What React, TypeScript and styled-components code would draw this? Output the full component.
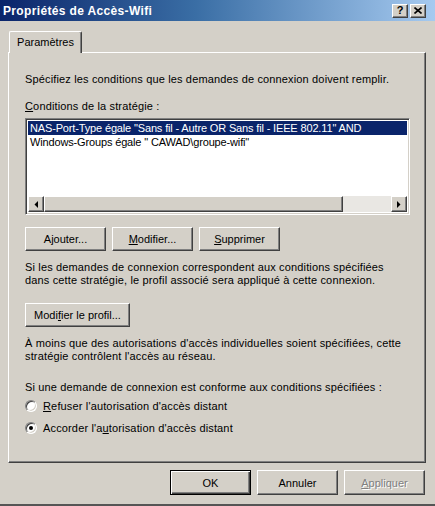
import React from "react";
import styled, { createGlobalStyle, css } from "styled-components";

const Global = createGlobalStyle`
  html, body { margin: 0; padding: 0; background: #d4d0c8; }
  body { font-family: "Liberation Sans", Arial, sans-serif; font-size: 11px; color: #000; }
  * { box-sizing: border-box; }
`;

const raised = css`
  border: 1px solid;
  border-color: #ffffff #404040 #404040 #ffffff;
  box-shadow: inset -1px -1px 0 #808080;
`;

const Window = styled.div`
  width: 435px;
  height: 506px;
  display: flex;
  flex-direction: column;
  background: #d4d0c8;
  border-bottom: 2px solid #555555;
`;

const TitleBar = styled.div`
  height: 21px;
  flex: none;
  display: flex;
  align-items: center;
  padding: 0 9px 0 3px;
  background: linear-gradient(to right, #0a246a 0%, #3a6ea5 45%, #a6caf0 100%);
`;

const Title = styled.div`
  color: #fff;
  font-weight: bold;
  font-size: 12px;
  letter-spacing: 0.35px;
`;

const CaptionButtons = styled.div`
  margin-left: auto;
  display: flex;
  gap: 2px;
`;

const CaptionButton = styled.div`
  ${raised};
  width: 16px;
  height: 14px;
  background: #d4d0c8;
  display: flex;
  align-items: center;
  justify-content: center;
  font-weight: bold;
  font-size: 11px;
  line-height: 1;
  color: #000;
`;

const Body = styled.div`
  flex: 1;
  display: flex;
  flex-direction: column;
  padding: 10px 0 0 8px;
`;

const TabStrip = styled.div`
  display: flex;
  padding-left: 1px;
  position: relative;
  z-index: 1;
  margin-bottom: -1px;
`;

const Tab = styled.div`
  width: 73px;
  height: 22px;
  background: #d4d0c8;
  border-left: 1px solid #fff;
  border-top: 1px solid #fff;
  border-right: 1px solid #404040;
  border-radius: 2px 2px 0 0;
  box-shadow: inset -1px 0 0 #808080;
  display: flex;
  align-items: center;
  justify-content: center;
  padding-bottom: 1px;
`;

const Panel = styled.div`
  width: 418px;
  height: 411px;
  border: 1px solid;
  border-color: #ffffff #404040 #404040 #ffffff;
  box-shadow: inset -1px -1px 0 #808080;
  padding: 20px 0 0 16px;
  display: flex;
  flex-direction: column;
`;

const Text = styled.div<{ $mt?: number }>`
  line-height: 13px;
  letter-spacing: 0.15px;
  margin-top: ${(p) => p.$mt ?? 0}px;
  white-space: nowrap;
`;

const ListBox = styled.div`
  margin-top: 5px;
  width: 385px;
  height: 97px;
  border: 1px solid;
  border-color: #808080 #ffffff #ffffff #808080;
  box-shadow: inset 1px 1px 0 #404040, inset -1px -1px 0 #d4d0c8;
  background: #fff;
  padding: 2px;
  display: flex;
  flex-direction: column;
`;

const Rows = styled.div`
  flex: 1;
  overflow: hidden;
`;

const ListRow = styled.div<{ $selected?: boolean }>`
  height: 14px;
  line-height: 14px;
  padding-left: 2px;
  white-space: nowrap;
  overflow: hidden;
  letter-spacing: -0.15px;
  background: ${(p) => (p.$selected ? "#0a246a" : "transparent")};
  color: ${(p) => (p.$selected ? "#fff" : "#000")};
`;

const HScroll = styled.div`
  height: 16px;
  display: flex;
  background: #e9e7e3;
`;

const ScrollArrow = styled.div`
  ${raised};
  width: 16px;
  height: 16px;
  background: #d4d0c8;
  display: flex;
  align-items: center;
  justify-content: center;
`;

const ScrollThumb = styled.div`
  ${raised};
  width: 299px;
  height: 16px;
  background: #d4d0c8;
`;

const ScrollTrack = styled.div`
  flex: 1;
`;

const ButtonRow = styled.div<{ $mt: number }>`
  display: flex;
  gap: 6px;
  margin-top: ${(p) => p.$mt}px;
`;

const Button = styled.div<{ $w?: number; $h?: number; $default?: boolean; $disabled?: boolean }>`
  width: ${(p) => p.$w ?? 81}px;
  height: ${(p) => p.$h ?? 24}px;
  background: #d4d0c8;
  display: flex;
  align-items: center;
  justify-content: center;
  ${(p) =>
    p.$default
      ? css`
          border: 1px solid #000;
          box-shadow: inset 1px 1px 0 #fff, inset -1px -1px 0 #404040, inset -2px -2px 0 #808080;
        `
      : raised}
  color: ${(p) => (p.$disabled ? "#808080" : "#000")};
  text-shadow: ${(p) => (p.$disabled ? "1px 1px 0 #fff" : "none")};
`;

const RadioRow = styled.div<{ $mt: number }>`
  display: flex;
  align-items: center;
  gap: 6px;
  height: 13px;
  letter-spacing: 0.15px;
  margin-top: ${(p) => p.$mt}px;
`;

const Radio = styled.div<{ $checked?: boolean }>`
  width: 12px;
  height: 12px;
  border-radius: 50%;
  border: 1px solid;
  border-color: #808080 #ffffff #ffffff #808080;
  box-shadow: inset 1px 1px 0 #404040, inset -1px -1px 0 #d4d0c8;
  background: #fff;
  display: flex;
  align-items: center;
  justify-content: center;
  &::after {
    content: "";
    width: 4px;
    height: 4px;
    border-radius: 50%;
    background: ${(p) => (p.$checked ? "#000" : "transparent")};
  }
`;

const Footer = styled.div`
  display: flex;
  justify-content: flex-end;
  gap: 6px;
  padding: 7px 10px 0 0;
`;

const Arrow = ({ dir }: { dir: "left" | "right" }) => (
  <svg width="4" height="7" viewBox="0 0 4 7">
    {dir === "left" ? <polygon points="4,0 4,7 0.5,3.5" fill="#000" /> : <polygon points="0,0 0,7 3.5,3.5" fill="#000" />}
  </svg>
);

export default function App() {
  return (
    <>
      <Global />
      <Window>
        <TitleBar>
          <Title>Propriétés de Accès-Wifi</Title>
          <CaptionButtons>
            <CaptionButton>?</CaptionButton>
            <CaptionButton>
              <svg width="8" height="7" viewBox="0 0 8 7">
                <path d="M0.5 0.5 L7.5 6.5 M7.5 0.5 L0.5 6.5" stroke="#000" strokeWidth="1.6" />
              </svg>
            </CaptionButton>
          </CaptionButtons>
        </TitleBar>
        <Body>
          <TabStrip>
            <Tab>Paramètres</Tab>
          </TabStrip>
          <Panel>
            <Text>Spécifiez les conditions que les demandes de connexion doivent remplir.</Text>
            <Text $mt={14}>
              <u>C</u>onditions de la stratégie :
            </Text>
            <ListBox>
              <Rows>
                <ListRow $selected>NAS-Port-Type égale "Sans fil - Autre OR Sans fil - IEEE 802.11" AND</ListRow>
                <ListRow>Windows-Groups égale " CAWAD\groupe-wifi"</ListRow>
              </Rows>
              <HScroll>
                <ScrollArrow>
                  <Arrow dir="left" />
                </ScrollArrow>
                <ScrollThumb />
                <ScrollTrack />
                <ScrollArrow>
                  <Arrow dir="right" />
                </ScrollArrow>
              </HScroll>
            </ListBox>
            <ButtonRow $mt={12}>
              <Button>
                A<u>j</u>outer...
              </Button>
              <Button>
                <u>M</u>odifier...
              </Button>
              <Button>
                <u>S</u>upprimer
              </Button>
            </ButtonRow>
            <Text $mt={10}>
              Si les demandes de connexion correspondent aux conditions spécifiées
              <br />
              dans cette stratégie, le profil associé sera appliqué à cette connexion.
            </Text>
            <ButtonRow $mt={16}>
              <Button $w={105}>
                Modi<u>f</u>ier le profil...
              </Button>
            </ButtonRow>
            <Text $mt={10}>
              À moins que des autorisations d'accès individuelles soient spécifiées, cette
              <br />
              stratégie contrôlent l'accès au réseau.
            </Text>
            <Text $mt={18}>Si une demande de connexion est conforme aux conditions spécifiées :</Text>
            <RadioRow $mt={5}>
              <Radio />
              <span>
                <u>R</u>efuser l'autorisation d'accès distant
              </span>
            </RadioRow>
            <RadioRow $mt={9}>
              <Radio $checked />
              <span>
                Accorder l'a<u>u</u>torisation d'accès distant
              </span>
            </RadioRow>
          </Panel>
          <Footer>
            <Button $default $h={25}>
              OK
            </Button>
            <Button $h={25}>Annuler</Button>
            <Button $h={25} $disabled>
              <u>A</u>ppliquer
            </Button>
          </Footer>
        </Body>
      </Window>
    </>
  );
}
